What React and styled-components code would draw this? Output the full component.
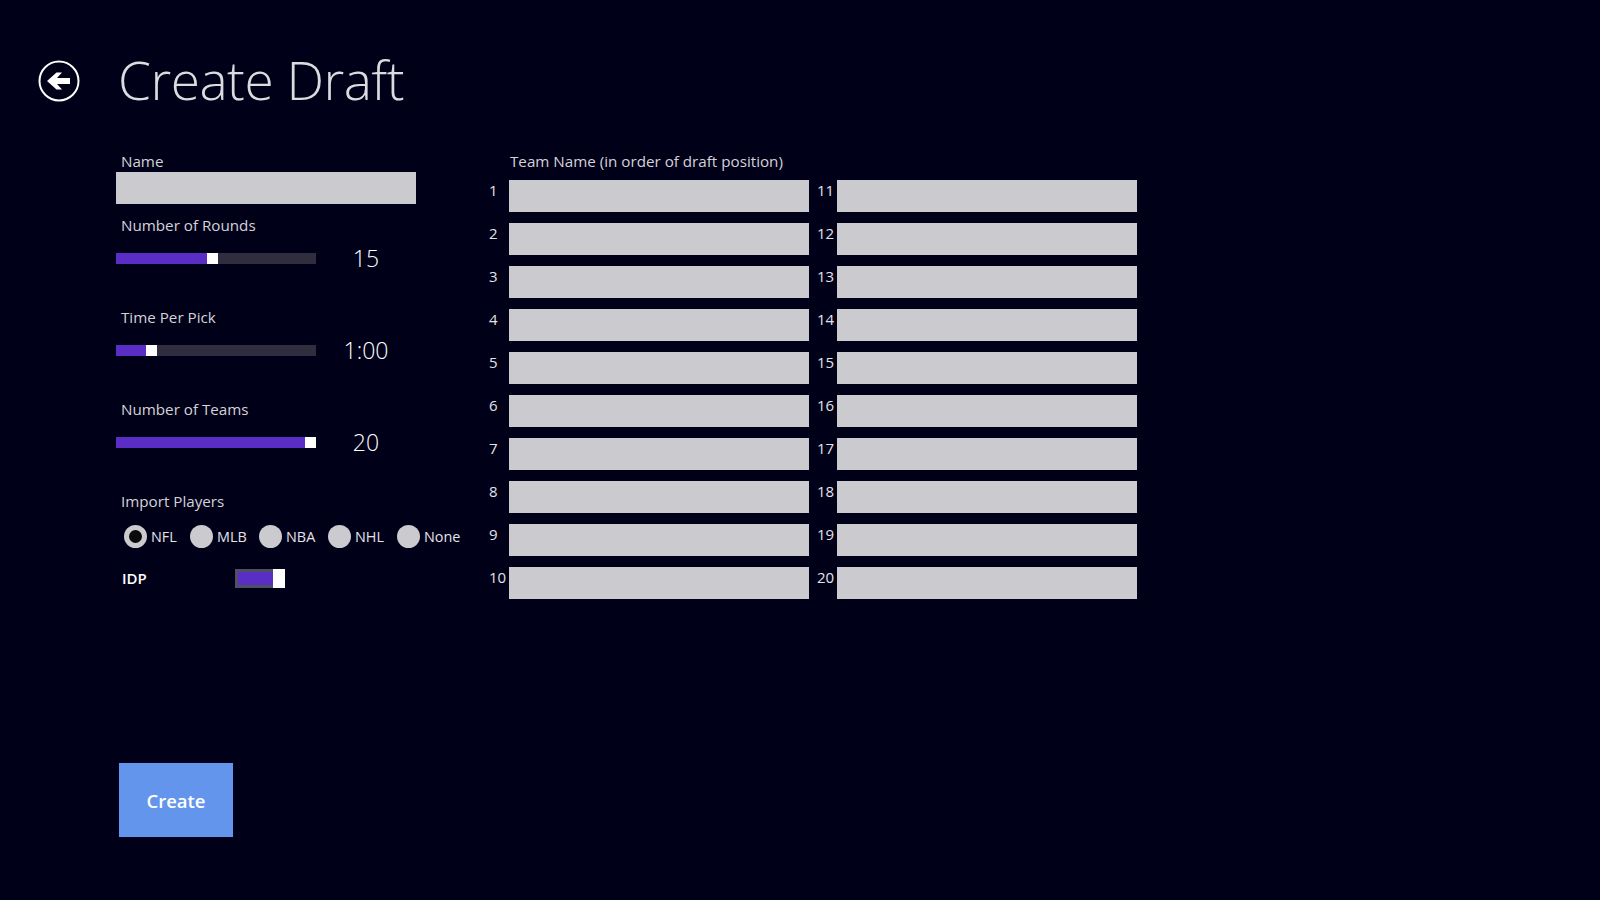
import React from "react";
import styled, { createGlobalStyle } from "styled-components";

const teamNumbers = [1, 2, 3, 4, 5, 6, 7, 8, 9, 10, 11, 12, 13, 14, 15, 16, 17, 18, 19, 20];
const sports = ["NFL", "MLB", "NBA", "NHL", "None"];

function App() {
  return (
    <>
      <GlobalStyle />
      <Page>
        <Header>
          <BackButton aria-label="Back">
            <svg width="42" height="42" viewBox="0 0 42 42">
              <circle cx="21" cy="21" r="19.5" fill="none" stroke="#fff" strokeWidth="2" />
              <path d="M32 18H19L24 12.5H18.5L9 21L18.5 29.5H24L19 24H32Z" fill="#fff" />
            </svg>
          </BackButton>
          <Title>Create Draft</Title>
        </Header>
        <Main>
          <LeftColumn>
            <NameLabel>Name</NameLabel>
            <NameInput />
            <Setting label="Number of Rounds" value="15" percent={45.5} />
            <Setting label="Time Per Pick" value="1:00" percent={15} />
            <Setting label="Number of Teams" value="20" percent={94.5} />
            <ImportGroup>
              <FieldLabel>Import Players</FieldLabel>
              <RadioRow>
                {sports.map((sport, i) => (
                  <RadioItem key={sport} $first={i === 0}>
                    <Radio $checked={i === 0} />
                    <RadioText>{sport}</RadioText>
                  </RadioItem>
                ))}
              </RadioRow>
            </ImportGroup>
            <ToggleRow>
              <ToggleLabel>IDP</ToggleLabel>
              <Toggle>
                <ToggleThumb />
              </Toggle>
            </ToggleRow>
          </LeftColumn>
          <RightColumn>
            <TeamHeading>Team Name (in order of draft position)</TeamHeading>
            <TeamGrid>
              {teamNumbers.map(n => (
                <TeamRow key={n}>
                  <TeamNumber>{n}</TeamNumber>
                  <TeamInput />
                </TeamRow>
              ))}
            </TeamGrid>
          </RightColumn>
        </Main>
        <CreateButton>Create</CreateButton>
      </Page>
    </>
  );
}

function Setting({ label, value, percent }) {
  return (
    <SettingBlock>
      <FieldLabel>{label}</FieldLabel>
      <SliderRow>
        <Track>
          <Fill style={{ width: `${percent}%` }} />
          <Thumb />
        </Track>
        <SliderValue>{value}</SliderValue>
      </SliderRow>
    </SettingBlock>
  );
}

const GlobalStyle = createGlobalStyle`
  html, body {
    margin: 0;
    height: 100%;
    background: #010019;
  }
  * {
    box-sizing: border-box;
  }
`;

const Page = styled.div`
  width: 1600px;
  height: 900px;
  overflow: hidden;
  background: #010019;
  color: #cfced3;
  font-family: "Open Sans", "Noto Sans", sans-serif;
  padding: 60px 0 0 38px;
`;

const Header = styled.header`
  display: flex;
  align-items: center;
  height: 42px;
`;

const BackButton = styled.div`
  width: 42px;
  height: 42px;
  margin-right: 38px;
`;

const Title = styled.h1`
  margin: -3px 0 0;
  font-size: 53.2px;
  font-weight: 300;
  line-height: 42px;
  color: #dcdbe0;
  letter-spacing: -0.5px;
`;

const Main = styled.main`
  display: flex;
  margin: 49px 0 0 78px;
`;

const LeftColumn = styled.div`
  width: 373px;
`;

const FieldLabel = styled.div`
  font-size: 15.2px;
  line-height: 20px;
  height: 20px;
  padding-left: 5px;
  color: #d4d3d8;
`;

const NameLabel = styled(FieldLabel)`
  height: 21px;
`;

const NameInput = styled.div`
  width: 300px;
  height: 32px;
  background: #cbcacf;
`;

const SettingBlock = styled.div`
  margin-top: 11px;
  height: 81px;
`;

const SliderRow = styled.div`
  display: flex;
  align-items: center;
  margin-top: 8px;
`;

const Track = styled.div`
  display: flex;
  width: 200px;
  height: 11px;
  background: #2f2d3e;
`;

const Fill = styled.div`
  height: 100%;
  background: #5a2dc5;
`;

const Thumb = styled.div`
  width: 11px;
  height: 100%;
  background: #fff;
`;

const SliderValue = styled.div`
  width: 100px;
  text-align: center;
  font-size: 23px;
  font-weight: 300;
  line-height: 30px;
  color: #fff;
`;

const ImportGroup = styled.div`
  margin-top: 11px;
`;

const RadioRow = styled.div`
  display: flex;
  margin: 13px 0 0 8px;
`;

const RadioItem = styled.div`
  display: flex;
  align-items: center;
  width: ${p => (p.$first ? "66px" : "69px")};
  gap: 4px;
`;

const RadioText = styled.span`
  padding-top: 2px;
  font-size: 14.4px;
  line-height: 22px;
  color: #e4e3e8;
`;

const Radio = styled.span`
  flex: none;
  width: 23px;
  height: 23px;
  border-radius: 50%;
  background: ${p => (p.$checked ? "#0a0a0a" : "#cbcacf")};
  border: ${p => (p.$checked ? "5px solid #cbcacf" : "none")};
`;

const ToggleRow = styled.div`
  display: flex;
  align-items: center;
  margin: 20px 0 0 6px;
`;

const ToggleLabel = styled.div`
  width: 113px;
  font-size: 15px;
  font-weight: 600;
  color: #fff;
`;

const Toggle = styled.div`
  position: relative;
  width: 50px;
  height: 19px;
  border: 3px solid #4f4f63;
  background: #5a2dc5;
`;

const ToggleThumb = styled.div`
  position: absolute;
  top: -3px;
  right: -3px;
  width: 12px;
  height: 19px;
  background: #fff;
`;

const RightColumn = styled.div`
  width: 648px;
`;

const TeamHeading = styled.div`
  font-size: 15.2px;
  line-height: 20px;
  margin-left: 21px;
  color: #d4d3d8;
`;

const TeamGrid = styled.div`
  display: grid;
  grid-auto-flow: column;
  grid-template-rows: repeat(10, 32px);
  grid-template-columns: repeat(2, 320px);
  column-gap: 8px;
  row-gap: 11px;
  margin-top: 9px;
`;

const TeamRow = styled.div`
  display: flex;
`;

const TeamNumber = styled.div`
  width: 20px;
  font-size: 15px;
  line-height: 20px;
  color: #e4e3e8;
`;

const TeamInput = styled.div`
  width: 300px;
  height: 32px;
  background: #cbcacf;
`;

const CreateButton = styled.button`
  display: block;
  width: 114px;
  height: 74px;
  margin: 164px 0 0 81px;
  padding: 0;
  border: none;
  background: #6495ed;
  color: #fff;
  font-family: inherit;
  font-size: 18.5px;
  font-weight: 600;
`;

export default App;
